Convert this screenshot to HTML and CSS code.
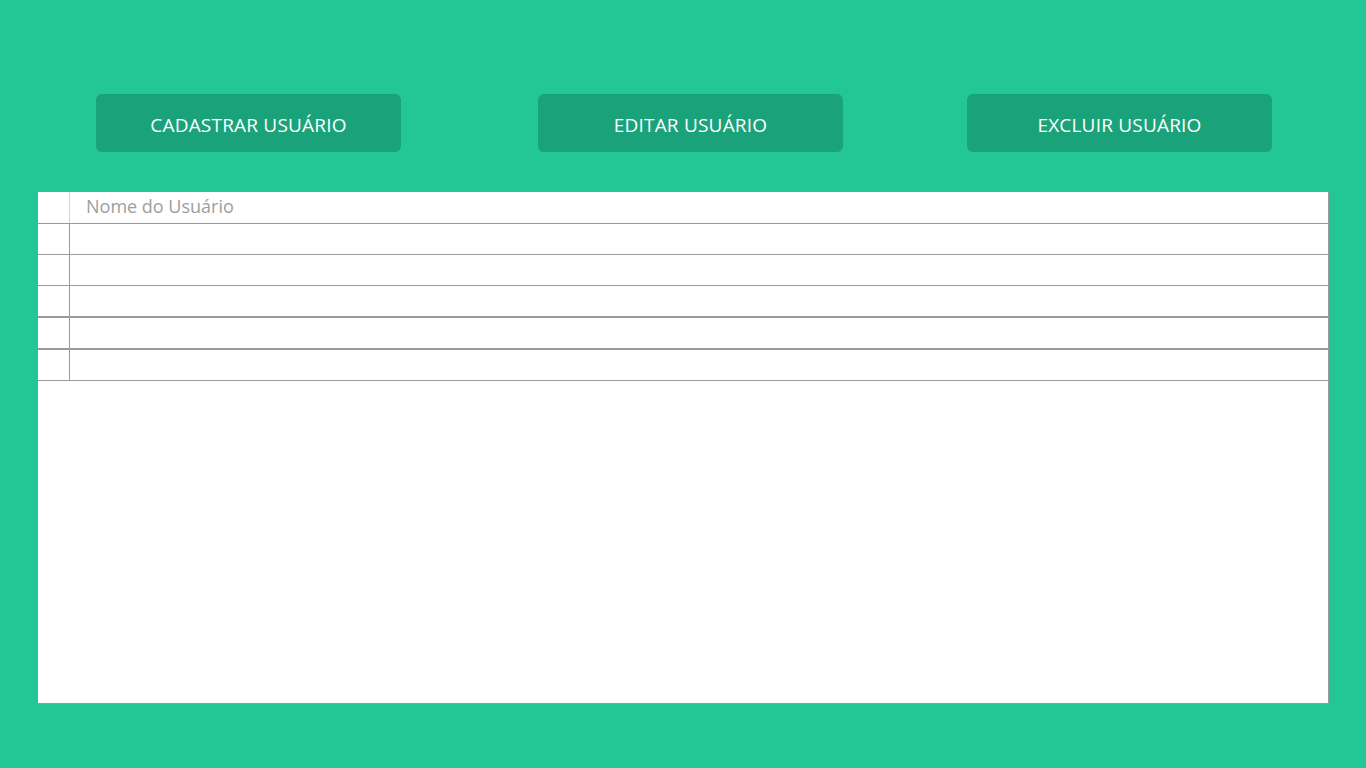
FILE: index.html
```html
<!DOCTYPE html>
<html lang="pt-BR">
<head>
<meta charset="utf-8">
<title>Usuários</title>
<link rel="stylesheet" href="styles.css">
</head>
<body>
<div class="page">
  <div class="toolbar">
    <button class="btn btn-first">CADASTRAR USUÁRIO</button>
    <button class="btn btn-second">EDITAR USUÁRIO</button>
    <button class="btn btn-third">EXCLUIR USUÁRIO</button>
  </div>
  <div class="grid">
    <div class="row head">
      <div class="cell-sel"></div>
      <div class="cell-name">Nome do Usuário</div>
    </div>
    <div class="row"><div class="cell-sel"></div><div class="cell-name"></div></div>
    <div class="row"><div class="cell-sel"></div><div class="cell-name"></div></div>
    <div class="row thick"><div class="cell-sel"></div><div class="cell-name"></div></div>
    <div class="row thick"><div class="cell-sel"></div><div class="cell-name"></div></div>
    <div class="row"><div class="cell-sel"></div><div class="cell-name"></div></div>
  </div>
</div>
</body>
</html>
```

FILE: styles.css
```css
html, body {
  margin: 0;
  padding: 0;
  background: #23c697;
  font-family: "Open Sans", "Noto Sans", sans-serif;
}
.page {
  width: 1366px;
  height: 768px;
  padding-top: 94px;
  box-sizing: border-box;
}
.toolbar {
  display: flex;
  padding-left: 96px;
  height: 58px;
}
.btn {
  width: 305px;
  height: 58px;
  border: none;
  border-radius: 6px;
  background: #1aa37a;
  color: #ffffff;
  font-family: "Open Sans", "Noto Sans", sans-serif;
  font-size: 19px;
  letter-spacing: 0.2px;
  padding: 0;
  padding-top: 3px;
}
.btn-second { margin-left: 137px; }
.btn-third { margin-left: 124px; }
.grid {
  margin: 40px 0 0 38px;
  width: 1291px;
  height: 512px;
  box-sizing: border-box;
  background: #ffffff;
  border-right: 1px solid #9a9a9a;
  border-bottom: 1px solid #9a9a9a;
}
.row {
  display: flex;
  height: 30px;
  border-bottom: 1px solid #9a9a9a;
}
.row.head {
  height: 31px;
}
.row.thick {
  height: 30px;
  border-bottom: 2px solid #999b9d;
}
.cell-sel {
  width: 31px;
  border-right: 1px solid #9a9a9a;
}
.head .cell-sel {
  border-right: 1px solid #d2d2d2;
}
.cell-name {
  flex: 1;
  padding-left: 16px;
  font-size: 18px;
  color: #9e9e9e;
  line-height: 29px;
}
```
